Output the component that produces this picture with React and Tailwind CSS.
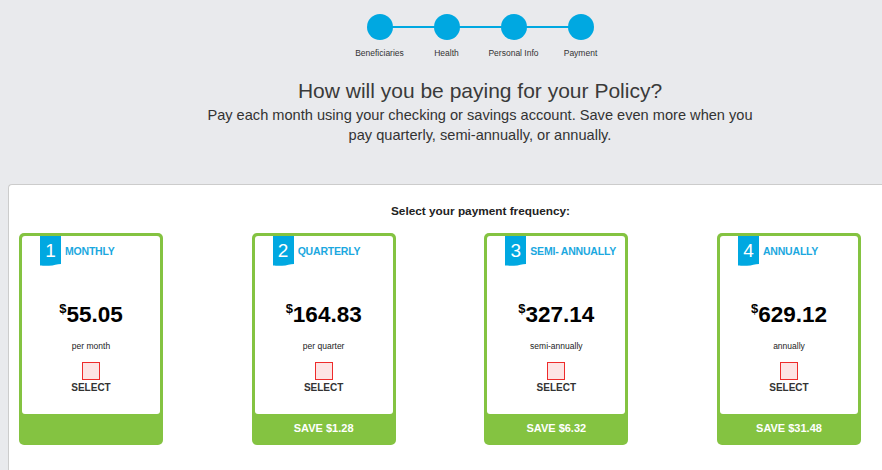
import React from 'react';

const STEPS = ['Beneficiaries', 'Health', 'Personal Info', 'Payment'];

const PLANS = [
  { num: 1, label: 'MONTHLY', price: '55.05', note: 'per month', save: null },
  { num: 2, label: 'QUARTERLY', price: '164.83', note: 'per quarter', save: 'SAVE $1.28' },
  { num: 3, label: 'SEMI- ANNUALLY', price: '327.14', note: 'semi-annually', save: 'SAVE $6.32' },
  { num: 4, label: 'ANNUALLY', price: '629.12', note: 'annually', save: 'SAVE $31.48' },
];

const Badge = ({ num }) => (
  <div className="relative w-[21px] h-[30px] flex-shrink-0">
    <svg width="21" height="30" viewBox="0 0 21 30" className="absolute inset-0">
      <path d="M0 0 H21 V28 C17 28 14 29.5 9 29.8 C5 30 2 29.6 0 29.6 Z" fill="#00a8e1" />
    </svg>
    <span className="relative flex h-[29px] items-center justify-center text-[19px] leading-none text-white">
      {num}
    </span>
  </div>
);

const PlanCard = ({ plan }) => (
  <div className="w-[144px] h-[212px] rounded-[5px] bg-[#84c341] p-[3px] flex flex-col">
    <div className="h-[178px] bg-white rounded-[3px] flex flex-col">
      <div className="flex items-center pl-[18px]">
        <Badge num={plan.num} />
        <span className="ml-[4px] mt-[2px] text-[10.5px] font-bold text-[#1ba8e0] tracking-[-0.2px]">
          {plan.label}
        </span>
      </div>
      <div className="mt-[38px] flex justify-center items-start text-black font-bold">
        <span className="text-[13px] leading-none mt-[-2px]">$</span>
        <span className="text-[22.5px] leading-none">{plan.price}</span>
      </div>
      <p className="mt-[14px] text-center text-[8.5px] leading-[10px] text-[#222]">{plan.note}</p>
      <div className="mt-[11px] mx-auto w-[18px] h-[18px] border border-[#ee2b2b] bg-[#fde4e4]" />
      <p className="mt-[2px] text-center text-[10px] leading-[12px] font-bold text-[#333]">SELECT</p>
    </div>
    <div className="flex-1 flex items-center justify-center text-[11px] font-bold text-white">
      {plan.save}
    </div>
  </div>
);

export default function App() {
  return (
    <div className="w-full h-[470px] overflow-hidden bg-[#e9eaed]" style={{ fontFamily: '"Liberation Sans", Arial, sans-serif' }}>
      <div className="w-[960px] h-[470px] flex flex-col">
        {/* header */}
        <div className="h-[184px] flex flex-col items-center flex-shrink-0">
          <div className="relative mt-[14px] grid grid-cols-4 w-[268px]">
            <div className="absolute left-[34px] right-[34px] top-[12px] h-[2px] bg-[#00a8e1]" />
            {STEPS.map((s) => (
              <div key={s} className="relative flex flex-col items-center">
                <div className="w-[26px] h-[26px] rounded-full bg-[#00a8e1]" />
                <span className="mt-[8px] text-[8.5px] leading-[10px] text-[#333] whitespace-nowrap">{s}</span>
              </div>
            ))}
          </div>
          <h1 className="mt-[20px] text-[21px] leading-[25px] text-[#3a3a3a]">
            How will you be paying for your Policy?
          </h1>
          <p className="mt-[3px] w-[570px] text-center text-[14.6px] leading-[19.5px] text-[#333]">
            Pay each month using your checking or savings account. Save even more when you pay quarterly, semi-annually, or annually.
          </p>
        </div>

        {/* panel */}
        <div className="ml-[8px] w-[944px] flex-1 bg-white border-l border-t border-[#cccccc] rounded-tl-[4px]">
          <p className="mt-[19px] text-center text-[11.8px] leading-[14px] font-bold text-[#222]">
            Select your payment frequency:
          </p>
          <div className="mt-[15px] ml-[10px] w-[842px] flex justify-between">
            {PLANS.map((p) => (
              <PlanCard key={p.num} plan={p} />
            ))}
          </div>
        </div>
      </div>
    </div>
  );
}
